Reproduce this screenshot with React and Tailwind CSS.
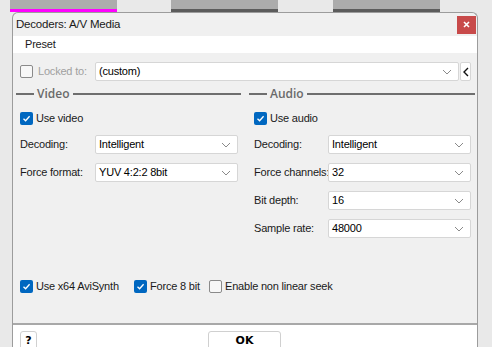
import React from 'react';

const font = { fontFamily: '"Liberation Sans", Arial, sans-serif' };

const Check = ({ checked }) =>
  checked ? (
    <span className="flex h-[13px] w-[13px] shrink-0 items-center justify-center rounded-[2px] bg-[#0067c0]">
      <svg width="9" height="9" viewBox="0 0 9 9">
        <path d="M1.5 4.8 L3.6 6.8 L7.6 2.2" fill="none" stroke="white" strokeWidth="1.3" />
      </svg>
    </span>
  ) : (
    <span className="h-[13px] w-[13px] shrink-0 rounded-[2px] border border-[#8a8a8a] bg-[#f7f7f7]" />
  );

const Chevron = () => (
  <svg width="10" height="6" viewBox="0 0 10 6" className="shrink-0">
    <path d="M1 1 L5 5 L9 1" fill="none" stroke="#8a8a8a" strokeWidth="1" />
  </svg>
);

const Combo = ({ value, className }) => (
  <div className={`flex h-[19px] shrink-0 items-center justify-between rounded-[2px] border border-[#d6d6d6] bg-white pl-[3px] pr-[6px] ${className}`}>
    <span className="whitespace-nowrap text-[11px] leading-none tracking-[-0.2px] text-black">{value}</span>
    <Chevron />
  </div>
);

const Row = ({ label, value, labelW }) => (
  <div className="flex items-center">
    <span className={`${labelW} shrink-0 whitespace-nowrap text-[11px] leading-none tracking-[-0.2px] text-[#1a1a1a]`}>{label}</span>
    <Combo value={value} className="w-[143px]" />
  </div>
);

const Header = ({ title }) => (
  <div className="flex h-[14px] items-center">
    <span className="h-[2px] w-[18px] bg-[#6e6e6e]" />
    <span className="px-[3px] text-[12px] font-semibold leading-none text-[#6a6a6a]" style={{ fontFamily: '"Open Sans", sans-serif' }}>{title}</span>
    <span className="h-[2px] flex-1 bg-[#6e6e6e]" />
  </div>
);

const CheckLabel = ({ checked, label, className = '' }) => (
  <div className={`flex shrink-0 items-center gap-[3px] ${className}`}>
    <Check checked={checked} />
    <span className="whitespace-nowrap text-[11px] leading-none tracking-[-0.2px] text-[#1a1a1a]">{label}</span>
  </div>
);

export default function App() {
  return (
    <div className="relative h-[347px] w-[492px] overflow-hidden bg-[#e9e9e9]" style={font}>
      <div className="flex h-[12px]">
        <div className="ml-[10px] w-[107px] border-b-[3px] border-[#ff00ff] bg-[#acacac]" />
        <div className="ml-[54px] w-[107px] border-b-[3px] border-[#5c5c5c] bg-[#acacac]" />
        <div className="ml-[55px] w-[107px] border-b-[3px] border-[#5c5c5c] bg-[#acacac]" />
      </div>
      <div className="ml-[12px] w-[466px] rounded-t-[6px] border border-b-0 border-[#9c9c9c] bg-[#f0f0f0]">
        <div className="flex h-[23px] items-center justify-between pl-[3px] pr-[1px]">
          <span className="text-[11.5px] leading-none tracking-[-0.2px] text-[#1a1a1a]">Decoders: A/V Media</span>
          <div className="flex h-[18px] w-[19px] items-center justify-center bg-[#c84a4a]">
            <svg width="7" height="7" viewBox="0 0 7 7">
              <path d="M1 1 L6 6 M6 1 L1 6" stroke="white" strokeWidth="1.6" />
            </svg>
          </div>
        </div>
        <div className="flex h-[17px] items-center bg-white pl-[12px]">
          <span className="text-[11px] leading-none tracking-[-0.2px] text-[#1a1a1a]">Preset</span>
        </div>
        <div className="h-[261px] pl-[3px]">
          <div className="mt-[9px] flex items-center pl-[4px]">
            <Check checked={false} />
            <span className="ml-[5px] w-[57px] shrink-0 whitespace-nowrap text-[11px] leading-none tracking-[-0.2px] text-[#a0a0a0]">Locked to:</span>
            <Combo value="(custom)" className="w-[364px]" />
            <div className="ml-[1px] flex h-[19px] w-[11px] shrink-0 items-center justify-center rounded-[2px] border border-[#d6d6d6] bg-white">
              <svg width="6" height="10" viewBox="0 0 6 10">
                <path d="M5 1 L1 5 L5 9" fill="none" stroke="#111" strokeWidth="1.4" />
              </svg>
            </div>
          </div>
          <div className="mt-[6px] flex gap-[8px]">
            <div className="w-[225px]">
              <Header title="Video" />
              <div className="pl-[4px]">
                <CheckLabel checked label="Use video" className="mt-[9px] h-[16px]" />
                <div className="mt-[9px] flex flex-col gap-[9px]">
                  <Row label="Decoding:" value="Intelligent" labelW="w-[75px]" />
                  <Row label="Force format:" value="YUV 4:2:2 8bit" labelW="w-[75px]" />
                </div>
              </div>
            </div>
            <div className="w-[226px]">
              <Header title="Audio" />
              <div className="pl-[5px]">
                <CheckLabel checked label="Use audio" className="mt-[9px] h-[16px]" />
                <div className="mt-[9px] flex flex-col gap-[9px]">
                  <Row label="Decoding:" value="Intelligent" labelW="w-[74px]" />
                  <Row label="Force channels:" value="32" labelW="w-[74px]" />
                  <Row label="Bit depth:" value="16" labelW="w-[74px]" />
                  <Row label="Sample rate:" value="48000" labelW="w-[74px]" />
                </div>
              </div>
            </div>
          </div>
          <div className="mt-[40px] flex h-[16px] items-center pl-[4px]">
            <CheckLabel checked label="Use x64 AviSynth" className="w-[114px]" />
            <CheckLabel checked label="Force 8 bit" className="w-[75px]" />
            <CheckLabel checked={false} label="Enable non linear seek" />
          </div>
        </div>
        <div className="h-[2px] bg-[#a8a8a8]" />
        <div className="flex h-[40px] items-start bg-white pt-[6px]">
          <div className="ml-[7px] flex h-[21px] w-[17px] items-center justify-center rounded-[3px] border border-[#d0d0d0] bg-white">
            <span className="text-[11px] font-bold text-black" style={{ fontFamily: '"DejaVu Sans", sans-serif' }}>?</span>
          </div>
          <div className="ml-[171px] flex h-[21px] w-[73px] items-center justify-center rounded-[3px] border border-[#d0d0d0] bg-white">
            <span className="text-[11px] font-bold text-black" style={{ fontFamily: '"DejaVu Sans", sans-serif' }}>OK</span>
          </div>
        </div>
      </div>
    </div>
  );
}
